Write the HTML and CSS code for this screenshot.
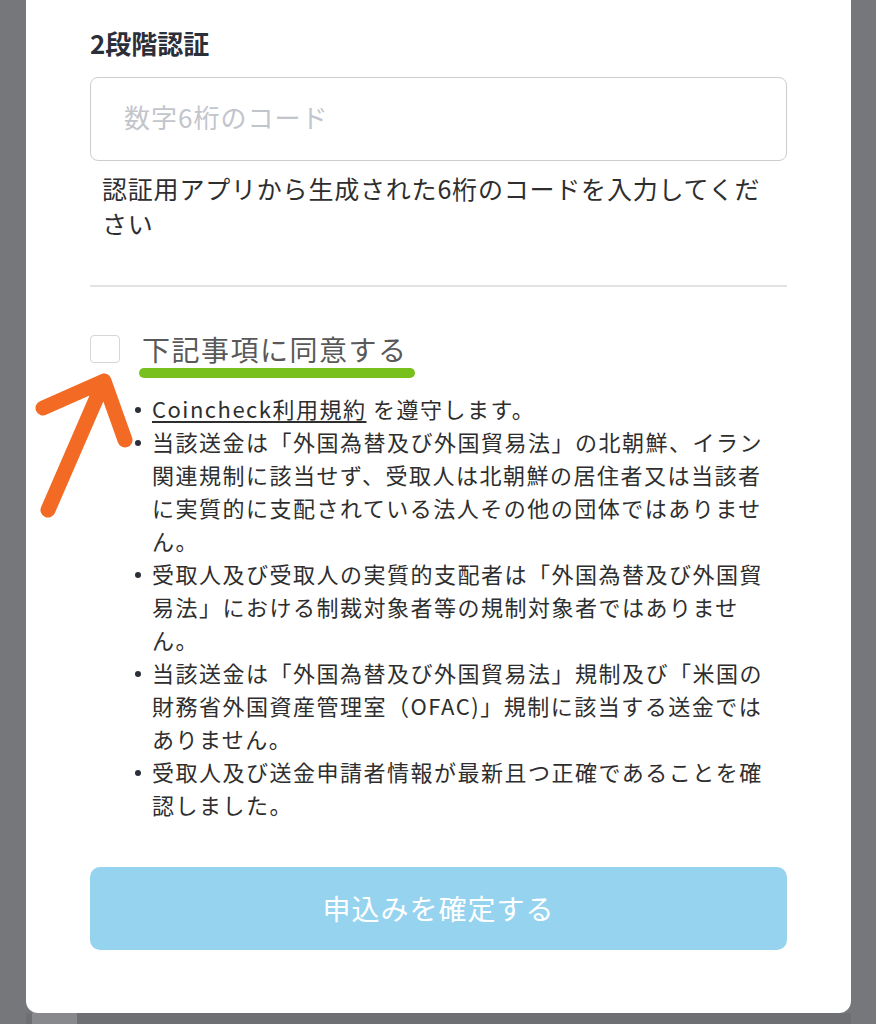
FILE: index.html
```html
<!DOCTYPE html>
<html lang="ja">
<head>
  <meta charset="UTF-8">
  <meta name="viewport" content="width=device-width, initial-scale=1.0">
  <title>2段階認証</title>
  <link rel="stylesheet" href="styles.css">
</head>
<body>
<div id="sheet">
  <h2 class="title">2段階認証</h2>
  <input class="code-input" type="text" placeholder="数字6桁のコード">
  <p class="hint">認証用アプリから生成された6桁のコードを入力してください</p>
  <hr class="divider">

  <label class="agree">
    <span class="box"></span>
    <span class="agree-text">下記事項に同意する</span>
  </label>

  <ul class="terms">
    <li><a href="#">Coincheck利用規約</a> を遵守します。</li>
    <li>当該送金は「外国為替及び外国貿易法」の北朝鮮、イラン関連規制に該当せず、受取人は北朝鮮の居住者又は当該者に実質的に支配されている法人その他の団体ではありません。</li>
    <li>受取人及び受取人の実質的支配者は「外国為替及び外国貿易法」における制裁対象者等の規制対象者ではありません。</li>
    <li>当該送金は「外国為替及び外国貿易法」規制及び「米国の財務省外国資産管理室（OFAC)」規制に該当する送金ではありません。</li>
    <li>受取人及び送金申請者情報が最新且つ正確であることを確認しました。</li>
  </ul>

  <button class="submit" type="button" disabled>申込みを確定する</button>
</div>
<div class="bottom-bar"><span class="tab"></span></div>

<!-- annotation arrow -->
<svg class="arrow" viewBox="0 0 876 1024" width="876" height="1024">
  <path d="M48 510 L104 381 M43 408 L104 381 L125 440" fill="none" stroke="#f26a24" stroke-width="15" stroke-linecap="round" stroke-linejoin="round"/>
</svg>
</body>
</html>
```

FILE: styles.css
```css
body {
    font-family: "Noto Sans CJK JP", "Noto Sans", sans-serif;
    margin: 0;
    padding: 0;
    background-color: #76777b;
    position: relative;
    height: 1024px;
    overflow: hidden;
}

#sheet {
    margin: 0 25px 0 26px;
    padding: 25px 64px 63px 64px;
    background-color: #fff;
    border-radius: 0 0 12px 12px;
}

.title {
    margin: 0;
    font-size: 26px;
    line-height: 36px;
    font-weight: bold;
    color: #2b2f3a;
}

.code-input {
    display: block;
    width: 100%;
    height: 84px;
    margin-top: 16px;
    padding: 0 0 5px 33px;
    border: 1px solid #cdcdcd;
    border-radius: 8px;
    box-sizing: border-box;
    font-family: inherit;
    font-size: 26px;
    letter-spacing: 1px;
    color: #333;
    background-color: #fff;
}

.code-input::placeholder {
    color: #c2c5cb;
}

.hint {
    margin: 10px 0 0 0;
    padding: 0 10px 0 12px;
    font-size: 25px;
    line-height: 35px;
    letter-spacing: 0.8px;
    color: #2e2e2e;
}

.divider {
    margin: 44px 0 0 0;
    border: none;
    height: 2px;
    background-color: #e3e3e3;
}

.agree {
    display: flex;
    align-items: center;
    gap: 22px;
    margin-top: 42px;
    height: 40px;
}

.box {
    width: 30px;
    height: 28px;
    border: 1px solid #d6d6d6;
    border-radius: 4px;
    box-sizing: border-box;
    background-color: #fff;
}

.agree-text {
    position: relative;
    font-size: 28px;
    line-height: 40px;
    letter-spacing: 1.5px;
    color: #595959;
}

/* green highlight drawn over the screenshot */
.agree-text::after {
    content: "";
    position: absolute;
    left: -3px;
    right: -7px;
    bottom: -9px;
    height: 10px;
    border-radius: 5px;
    background-color: #78c01e;
}

.terms {
    list-style: none;
    margin: 23px 0 0 0;
    padding: 0 12px 0 62px;
    font-size: 22px;
    line-height: 33px;
    letter-spacing: 1.5px;
    color: #2e2e2e;
}

.terms li {
    position: relative;
}

.terms li::before {
    content: "";
    position: absolute;
    left: -17px;
    top: 15px;
    width: 6px;
    height: 6px;
    border-radius: 50%;
    background-color: #2b2f3a;
}

.terms a {
    color: #2e2e2e;
    text-decoration: underline;
    text-underline-offset: 3px;
}

.submit {
    display: block;
    width: 100%;
    height: 83px;
    margin-top: 46px;
    padding-bottom: 3px;
    border: none;
    border-radius: 10px;
    background-color: #96d3ef;
    color: #fff;
    font-family: inherit;
    font-size: 28px;
    letter-spacing: 1px;
}

.bottom-bar {
    height: 11px;
    margin: 0 25px 0 26px;
    background-color: #6e6f73;
}

.bottom-bar .tab {
    display: block;
    width: 45px;
    height: 11px;
    margin-left: 6px;
    background-color: #88898c;
}

.arrow {
    position: absolute;
    left: 0;
    top: 0;
    pointer-events: none;
}
```
